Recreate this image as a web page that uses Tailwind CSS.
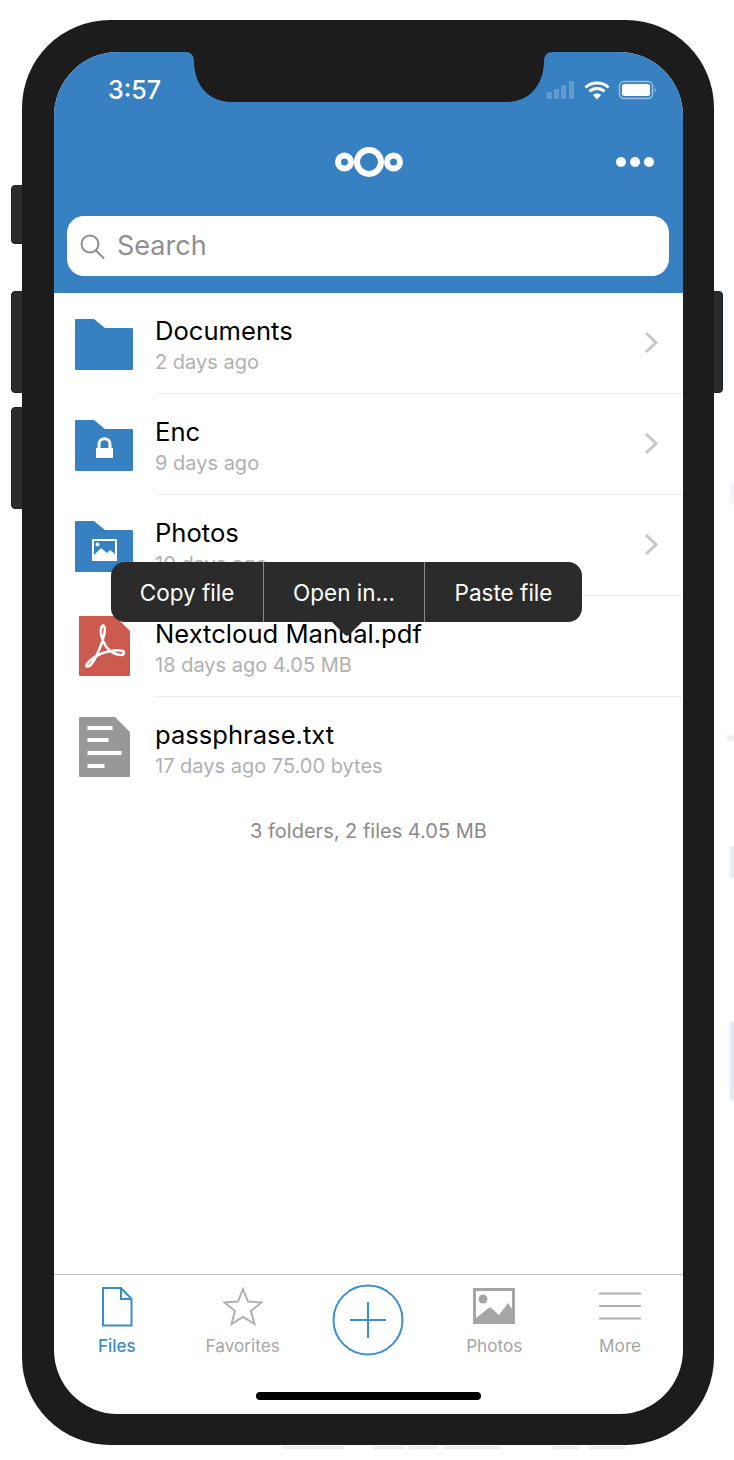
<!DOCTYPE html>
<html lang="en">
<head>
    <meta charset="UTF-8">
    <title>Nextcloud Files</title>
    <script src="https://cdn.jsdelivr.net/npm/@tailwindcss/browser@4"></script>
</head>
<body class="bg-white font-['Inter',sans-serif] antialiased">
<div class="relative w-[734px] h-[1460px] overflow-hidden pl-[22px] pt-[20px]">

    <!-- faint bits of the backdrop showing round the phone -->
    <div class="absolute left-[730px] top-[482px] w-[4px] h-[22px] bg-[#eef2f7] blur-[1px]"></div>
    <div class="absolute left-[727px] top-[735px] w-[7px] h-[6px] bg-[#e8eef5] blur-[1px]"></div>
    <div class="absolute left-[730px] top-[846px] w-[4px] h-[32px] bg-[#e3eaf2] blur-[1px]"></div>
    <div class="absolute left-[730px] top-[1022px] w-[4px] h-[78px] bg-[#dce5ef] blur-[1px]"></div>
    <div class="absolute left-[283px] top-[1446px] w-[61px] h-[3px] bg-[#ececec]"></div>
    <div class="absolute left-[373px] top-[1446px] w-[31px] h-[3px] bg-[#ececec]"></div>
    <div class="absolute left-[409px] top-[1446px] w-[28px] h-[3px] bg-[#ececec]"></div>
    <div class="absolute left-[444px] top-[1446px] w-[56px] h-[3px] bg-[#ececec]"></div>
    <div class="absolute left-[553px] top-[1446px] w-[26px] h-[3px] bg-[#ececec]"></div>
    <div class="absolute left-[589px] top-[1446px] w-[36px] h-[3px] bg-[#ececec]"></div>

    <!-- side buttons -->
    <div class="absolute left-[11px] top-[185px] w-[13px] h-[59px] bg-[#2c2c2c] border border-[#16202a] rounded-l-[4px]"></div>
    <div class="absolute left-[11px] top-[291px] w-[13px] h-[102px] bg-[#2c2c2c] border border-[#16202a] rounded-l-[4px]"></div>
    <div class="absolute left-[11px] top-[407px] w-[13px] h-[102px] bg-[#2c2c2c] border border-[#16202a] rounded-l-[4px]"></div>
    <div class="absolute left-[712px] top-[291px] w-[11px] h-[102px] bg-[#2c2c2c] border border-[#16202a] rounded-r-[4px]"></div>

    <!-- phone body -->
    <div class="relative w-[692px] h-[1425px] bg-[#1c1c1c] rounded-[88px] pl-[32px] pr-[31px] pt-[32px]">
        <div class="relative w-[629px] h-[1362px] bg-white rounded-[64px] overflow-hidden flex flex-col">

            <!-- header -->
            <div class="bg-[#3780c2] h-[241px] shrink-0">
                <div class="h-[76px] flex items-center justify-between pl-[54px] pr-[27px]">
                    <span class="text-white text-[25px] font-medium mt-[2px]">3:57</span>
                    <svg width="110" height="20" viewBox="0 0 110 20">
                        <g fill="#ffffff" fill-opacity="0.22">
                            <rect x="1" y="12" width="5" height="7" rx="1.5"/>
                            <rect x="8" y="9" width="5" height="10" rx="1.5"/>
                            <rect x="15" y="5" width="5" height="14" rx="1.5"/>
                            <rect x="23" y="1" width="5" height="18" rx="1.5"/>
                        </g>
                        <g fill="none" stroke="#ffffff" stroke-width="3">
                            <path d="M39.5 7.5C45.5 1.500 56.500 1.500 62.500 7.500"/>
                            <path d="M43.500 11.500C47.500 7.500 54.500 7.500 58.500 11.500"/>
                        </g>
                        <path d="M47 15C49 13 53 13 55 15L51 19.500Z" fill="#ffffff"/>
                        <rect x="73.500" y="1.500" width="33" height="17" rx="4.500" fill="none" stroke="#ffffff" stroke-opacity="0.5" stroke-width="1.500"/>
                        <rect x="76" y="4" width="28" height="12" rx="2.500" fill="#ffffff"/>
                        <path d="M108.500 7.500C110 8 110 12 108.500 12.500Z" fill="#ffffff" fill-opacity="0.5"/>
                    </svg>
                </div>
                <div class="relative h-[68px] flex items-center justify-center">
                    <svg width="68" height="32" viewBox="0 0 68 32" fill="none" stroke="#ffffff">
                        <circle cx="34" cy="16" r="12" stroke-width="6"/>
                        <circle cx="9.500" cy="16" r="6.500" stroke-width="6"/>
                        <circle cx="58.500" cy="16" r="6.500" stroke-width="6"/>
                    </svg>
                    <div class="absolute right-[29px] top-[29px] flex gap-[4px]">
                        <div class="w-[10px] h-[10px] rounded-full bg-white"></div>
                        <div class="w-[10px] h-[10px] rounded-full bg-white"></div>
                        <div class="w-[10px] h-[10px] rounded-full bg-white"></div>
                    </div>
                </div>
                <div class="mt-[20px] ml-[13px] w-[602px] h-[60px] bg-white rounded-[17px] flex items-center pl-[13px] gap-[12px]">
                    <svg width="25" height="25" viewBox="0 0 25 25" fill="none" stroke="#8e8e93" stroke-width="2">
                        <circle cx="10" cy="10" r="8.500"/>
                        <path d="M16 16.500L23.500 24" stroke-linecap="round"/>
                    </svg>
                    <span class="text-[27px] text-[#8e8e93] leading-none mb-[2px]">Search</span>
                </div>
            </div>

            <!-- file list -->
            <div class="flex-1">
                <div class="h-[101px] flex">
                    <div class="w-[101px] shrink-0 flex items-center justify-center">
                        <svg class="mt-[2px] mr-[2px]" width="58" height="51" viewBox="0 0 58 51"><path d="M1 0H19L30 9H57Q58 9 58 10V50Q58 51 57 51H1Q0 51 0 50V1Q0 0 1 0Z" fill="#3780c2"/></svg>
                    </div>
                    <div class="flex-1 border-b border-[#eeeeee] flex items-center pr-[25px]">
                        <div class="flex-1 pt-[3px]">
                            <div class="text-[25.6px] leading-[30px] text-black">Documents</div>
                            <div class="text-[20px] leading-[24px] mt-[4px] text-[#b0b0b0]">2 days ago</div>
                        </div>
                        <svg class="mb-[1px]" width="14" height="23" viewBox="0 0 14 23" fill="none" stroke="#c7c7cc" stroke-width="3"><path d="M2 2L12 11.500L2 21"/></svg>
                    </div>
                </div>
                <div class="h-[101px] flex">
                    <div class="w-[101px] shrink-0 flex items-center justify-center">
                        <svg class="mt-[2px] mr-[2px]" width="58" height="51" viewBox="0 0 58 51">
                            <path d="M1 0H19L30 9H57Q58 9 58 10V50Q58 51 57 51H1Q0 51 0 50V1Q0 0 1 0Z" fill="#3780c2"/>
                            <path d="M21 28H38V38H21Z" fill="#ffffff"/>
                            <path d="M24 28V24C24 17 35 17 35 24V28" fill="none" stroke="#ffffff" stroke-width="3"/>
                        </svg>
                    </div>
                    <div class="flex-1 border-b border-[#eeeeee] flex items-center pr-[25px]">
                        <div class="flex-1 pt-[3px]">
                            <div class="text-[25.6px] leading-[30px] text-black">Enc</div>
                            <div class="text-[20px] leading-[24px] mt-[4px] text-[#b0b0b0]">9 days ago</div>
                        </div>
                        <svg class="mb-[1px]" width="14" height="23" viewBox="0 0 14 23" fill="none" stroke="#c7c7cc" stroke-width="3"><path d="M2 2L12 11.500L2 21"/></svg>
                    </div>
                </div>
                <div class="h-[101px] flex">
                    <div class="w-[101px] shrink-0 flex items-center justify-center">
                        <svg class="mt-[2px] mr-[2px]" width="58" height="51" viewBox="0 0 58 51">
                            <path d="M1 0H19L30 9H57Q58 9 58 10V50Q58 51 57 51H1Q0 51 0 50V1Q0 0 1 0Z" fill="#3780c2"/>
                            <rect x="18" y="19" width="23" height="20" fill="none" stroke="#ffffff" stroke-width="2"/>
                            <circle cx="22.500" cy="23.500" r="2" fill="#ffffff"/>
                            <path d="M19 34L26 27L32 32L35 29L40 33V38H19Z" fill="#ffffff"/>
                        </svg>
                    </div>
                    <div class="flex-1 border-b border-[#eeeeee] flex items-center pr-[25px]">
                        <div class="flex-1 pt-[3px]">
                            <div class="text-[25.6px] leading-[30px] text-black">Photos</div>
                            <div class="text-[20px] leading-[24px] mt-[4px] text-[#b0b0b0]">10 days ago</div>
                        </div>
                        <svg class="mb-[1px]" width="14" height="23" viewBox="0 0 14 23" fill="none" stroke="#c7c7cc" stroke-width="3"><path d="M2 2L12 11.500L2 21"/></svg>
                    </div>
                </div>
                <div class="h-[101px] flex">
                    <div class="w-[101px] shrink-0 flex items-center justify-center">
                        <svg class="mb-[2px]" width="51" height="60" viewBox="0 0 51 60">
                            <path d="M1 0H36L51 15V59Q51 60 50 60H1Q0 60 0 59V1Q0 0 1 0Z" fill="#cc5a4e"/>
                            <path d="M24.500 9.500C21 10 21 18 24 25C27 32 33 38 41 39C46 39.500 46 35 42 34.500C34 33 20 37 13 43C8 47 6 50 8 50.500C11 51 16 44 20 34C24 25 28 12 24.500 9.500Z" fill="none" stroke="#ffffff" stroke-width="2.500"/>
                        </svg>
                    </div>
                    <div class="flex-1 border-b border-[#eeeeee] flex items-center">
                        <div class="flex-1 pt-[3px]">
                            <div class="text-[25.6px] leading-[30px] text-black">Nextcloud Manual.pdf</div>
                            <div class="text-[20px] leading-[24px] mt-[4px] text-[#b0b0b0]">18 days ago 4.05 MB</div>
                        </div>
                    </div>
                </div>
                <div class="h-[101px] flex">
                    <div class="w-[101px] shrink-0 flex items-center justify-center">
                        <svg class="mb-[2px]" width="51" height="60" viewBox="0 0 51 60">
                            <path d="M1 0H36L51 15V59Q51 60 50 60H1Q0 60 0 59V1Q0 0 1 0Z" fill="#989898"/>
                            <g fill="#ffffff">
                                <rect x="8.500" y="9" width="25" height="4"/>
                                <rect x="8.500" y="21" width="21" height="4"/>
                                <rect x="8.500" y="34" width="34" height="4"/>
                                <rect x="8.500" y="47" width="17" height="4"/>
                            </g>
                        </svg>
                    </div>
                    <div class="flex-1 flex items-center">
                        <div class="flex-1 pt-[3px]">
                            <div class="text-[25.6px] leading-[30px] text-black">passphrase.txt</div>
                            <div class="text-[20px] leading-[24px] mt-[4px] text-[#b0b0b0]">17 days ago 75.00 bytes</div>
                        </div>
                    </div>
                </div>
                <div class="h-[66px] flex items-center justify-center text-[20px] text-[#8a8a8a]">3 folders, 2 files 4.05 MB</div>
            </div>

            <!-- tab bar -->
            <div class="h-[140px] shrink-0 border-t border-[#c8c8c8] flex flex-col">
                <div class="h-[117px] grid grid-cols-5">
                    <div class="flex flex-col items-center pt-[12px]">
                        <svg width="32" height="40" viewBox="0 0 32 40" fill="none" stroke="#3b8bcb" stroke-width="2">
                            <path d="M2 1H20L30.500 12V38.500H2Z"/>
                            <path d="M20 1V12H30.500"/>
                        </svg>
                        <span class="mt-[9px] text-[17px] leading-[20px] font-medium text-[#3b8bcb]">Files</span>
                    </div>
                    <div class="flex flex-col items-center pt-[12px]">
                        <svg width="40" height="40" viewBox="0 0 40 40" fill="none" stroke="#b0b0b0" stroke-width="2">
                            <path d="M20 2L25 14.500L38.500 15.500L28 24L31.500 37L20 30L8.500 37L12 24L1.500 15.500L15 14.500Z"/>
                        </svg>
                        <span class="mt-[9px] text-[17.2px] leading-[20px] text-[#a5a5a5]">Favorites</span>
                    </div>
                    <div class="flex justify-center pt-[9px]">
                        <svg width="72" height="72" viewBox="0 0 72 72" fill="none" stroke="#3b8ecf" stroke-width="2">
                            <circle cx="36" cy="36" r="34.500"/>
                            <path d="M36 18V54M18 36H54"/>
                        </svg>
                    </div>
                    <div class="flex flex-col items-center pt-[12px]">
                        <svg width="42" height="40" viewBox="0 0 42 40">
                            <rect x="1.500" y="2.500" width="39" height="33" fill="none" stroke="#a5a5a5" stroke-width="3"/>
                            <path d="M3 31L17 20L26 28L35 16L39 22V34H3Z" fill="#a5a5a5"/>
                            <circle cx="10" cy="12" r="4.500" fill="#a5a5a5"/>
                        </svg>
                        <span class="mt-[9px] text-[17.2px] leading-[20px] text-[#a5a5a5]">Photos</span>
                    </div>
                    <div class="flex flex-col items-center pt-[12px]">
                        <svg width="42" height="40" viewBox="0 0 42 40" fill="none" stroke="#b0b0b0" stroke-width="2">
                            <path d="M0 6.500H42M0 19H42M0 31.500H42"/>
                        </svg>
                        <span class="mt-[9px] text-[17.2px] leading-[20px] text-[#a5a5a5]">More</span>
                    </div>
                </div>
                <div class="mx-auto w-[225px] h-[8px] rounded-full bg-black"></div>
            </div>

            <!-- notch -->
            <svg class="absolute left-[132px] top-0" width="366" height="50" viewBox="0 0 366 50">
                <path d="M0 0C4 0 8 3 8 9C8 30 20 50 46 50H320C346 50 358 30 358 9C358 3 362 0 366 0Z" fill="#1c1c1c"/>
            </svg>

            <!-- copy / paste menu -->
            <div class="absolute left-[57px] top-[510px] w-[471px] h-[60px] rounded-[14px] bg-[#2b2b2b] flex text-[22.5px] text-white">
                <div class="w-[153px] pt-[1px] flex items-center justify-center border-r border-[#8a8a8a]">Copy file</div>
                <div class="w-[161px] pt-[1px] flex items-center justify-center border-r border-[#8a8a8a]">Open in...</div>
                <div class="flex-1 pt-[1px] flex items-center justify-center">Paste file</div>
            </div>
            <svg class="absolute left-[278px] top-[570px]" width="30" height="14" viewBox="0 0 30 14">
                <path d="M0 0H30L17 13Q15 14.500 13 13Z" fill="#2b2b2b"/>
            </svg>
        </div>
    </div>
</div>
</body>
</html>
